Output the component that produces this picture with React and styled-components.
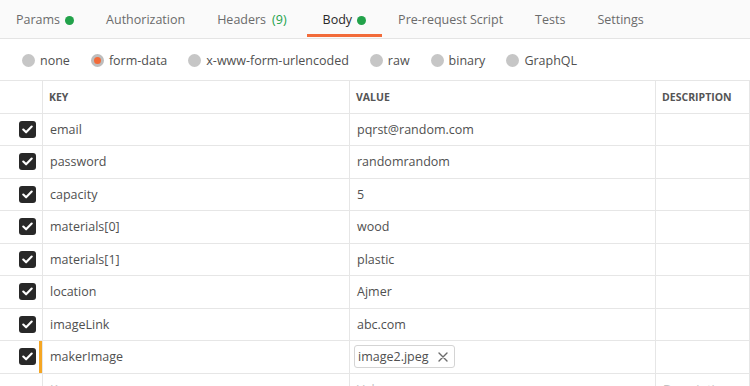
import React from "react";
import styled, { createGlobalStyle } from "styled-components";

const Global = createGlobalStyle`
  html, body { margin: 0; padding: 0; background: #fff; overflow: hidden; }
  body { font-family: "Open Sans", "Noto Sans", sans-serif; }
  * { box-sizing: border-box; }
`;

const Page = styled.div`
  width: 750px;
  height: 386px;
  overflow: hidden;
`;

const TabBar = styled.div`
  display: flex;
  height: 39px;
  background: #fafafa;
  border-bottom: 1px solid #e4e4e4;
`;

const Tab = styled.div`
  display: flex;
  align-items: center;
  gap: 5px;
  padding: 5px 16px 0;
  font-size: 12.5px;
  color: ${(p) => (p.$active ? "#282828" : "#6b6b6b")};
  border-bottom: 3px solid ${(p) => (p.$active ? "#f26b3a" : "transparent")};
  margin-bottom: 1px;
  white-space: nowrap;
`;

const Dot = styled.span`
  width: 9px;
  height: 9px;
  border-radius: 50%;
  background: #22a24a;
  margin-top: 1px;
`;

const Count = styled.span`
  color: #22a24a;
  margin: 0 4px 0 1px;
`;

const RadioRow = styled.div`
  display: flex;
  align-items: center;
  gap: 21px;
  height: 41px;
  padding: 1px 0 0 22px;
`;

const RadioItem = styled.label`
  display: flex;
  align-items: center;
  gap: 5px;
  font-size: 12.5px;
  color: #505050;
`;

const RadioCircle = styled.span`
  width: 13px;
  height: 13px;
  border-radius: 50%;
  background: ${(p) => (p.$checked ? "#f26b3a" : "#c6c6c6")};
  border: ${(p) => (p.$checked ? "3px solid #bdbdbd" : "none")};
`;

const Table = styled.div`
  display: grid;
  grid-template-columns: 43px 307px 306px 1fr;
  grid-auto-rows: 32.5px;
  border-top: 1px solid #e6e6e6;
`;

const Cell = styled.div`
  display: flex;
  align-items: center;
  padding: 0 7px;
  border-right: 1px solid #e6e6e6;
  border-bottom: 1px solid #e6e6e6;
  font-size: 12.5px;
  color: ${(p) => (p.$placeholder ? "#c2c2c2" : "#505050")};
  white-space: nowrap;
  overflow: hidden;
`;

const HeadCell = styled(Cell)`
  font-size: 10.5px;
  font-weight: 700;
  color: #555;
  padding: 0 6px;
`;

const CheckCell = styled.div`
  display: flex;
  align-items: stretch;
  justify-content: flex-end;
  gap: 3px;
  border-right: 1px solid #e6e6e6;
  border-bottom: 1px solid #e6e6e6;
`;

const CheckWrap = styled.div`
  display: flex;
  align-items: center;
`;

const Check = styled.span`
  width: 17px;
  height: 17px;
  border-radius: 3px;
  background: #282828;
  display: flex;
  align-items: center;
  justify-content: center;
`;

const Marker = styled.span`
  width: 3px;
  background: ${(p) => (p.$on ? "#f5a623" : "transparent")};
`;

const FileChip = styled.span`
  display: inline-flex;
  align-items: center;
  gap: 9px;
  height: 23px;
  margin-left: -3px;
  padding: 0 6px 0 3px;
  border: 1px solid #d4d4d4;
  border-radius: 3px;
  font-size: 12.5px;
  color: #505050;
`;

const CheckIcon = () => (
  <svg width="11" height="9" viewBox="0 0 11 9">
    <path d="M1.3 4.6 L4.1 7.3 L9.7 1.6" fill="none" stroke="#fff" strokeWidth="2.1" strokeLinecap="round" strokeLinejoin="round" />
  </svg>
);

const CloseIcon = () => (
  <svg width="10" height="10" viewBox="0 0 10 10">
    <path d="M1 1 L9 9 M9 1 L1 9" stroke="#6b6b6b" strokeWidth="1.4" strokeLinecap="round" />
  </svg>
);

const tabs = [
  { label: "Params", dot: true },
  { label: "Authorization" },
  { label: "Headers", count: "(9)" },
  { label: "Body", dot: true, active: true },
  { label: "Pre-request Script" },
  { label: "Tests" },
  { label: "Settings" },
];

const radios = ["none", "form-data", "x-www-form-urlencoded", "raw", "binary", "GraphQL"];

const rows = [
  ["email", "pqrst@random.com"],
  ["password", "randomrandom"],
  ["capacity", "5"],
  ["materials[0]", "wood"],
  ["materials[1]", "plastic"],
  ["location", "Ajmer"],
  ["imageLink", "abc.com"],
  ["makerImage", null, "image2.jpeg"],
];

export default function App() {
  return (
    <Page>
      <Global />
      <TabBar>
        {tabs.map((t) => (
          <Tab key={t.label} $active={t.active}>
            {t.label}
            {t.count && <Count>{t.count}</Count>}
            {t.dot && <Dot />}
          </Tab>
        ))}
      </TabBar>
      <RadioRow>
        {radios.map((r) => (
          <RadioItem key={r}>
            <RadioCircle $checked={r === "form-data"} />
            {r}
          </RadioItem>
        ))}
      </RadioRow>
      <Table>
        <CheckCell />
        <HeadCell>KEY</HeadCell>
        <HeadCell>VALUE</HeadCell>
        <HeadCell>DESCRIPTION</HeadCell>
        {rows.map(([k, v, file]) => (
          <React.Fragment key={k}>
            <CheckCell>
              <CheckWrap>
                <Check>
                  <CheckIcon />
                </Check>
              </CheckWrap>
              <Marker $on={!!file} />
            </CheckCell>
            <Cell>{k}</Cell>
            <Cell>
              {file ? (
                <FileChip>
                  {file}
                  <CloseIcon />
                </FileChip>
              ) : (
                v
              )}
            </Cell>
            <Cell />
          </React.Fragment>
        ))}
        <CheckCell />
        <Cell $placeholder>Key</Cell>
        <Cell $placeholder>Value</Cell>
        <Cell $placeholder>Description</Cell>
      </Table>
    </Page>
  );
}
